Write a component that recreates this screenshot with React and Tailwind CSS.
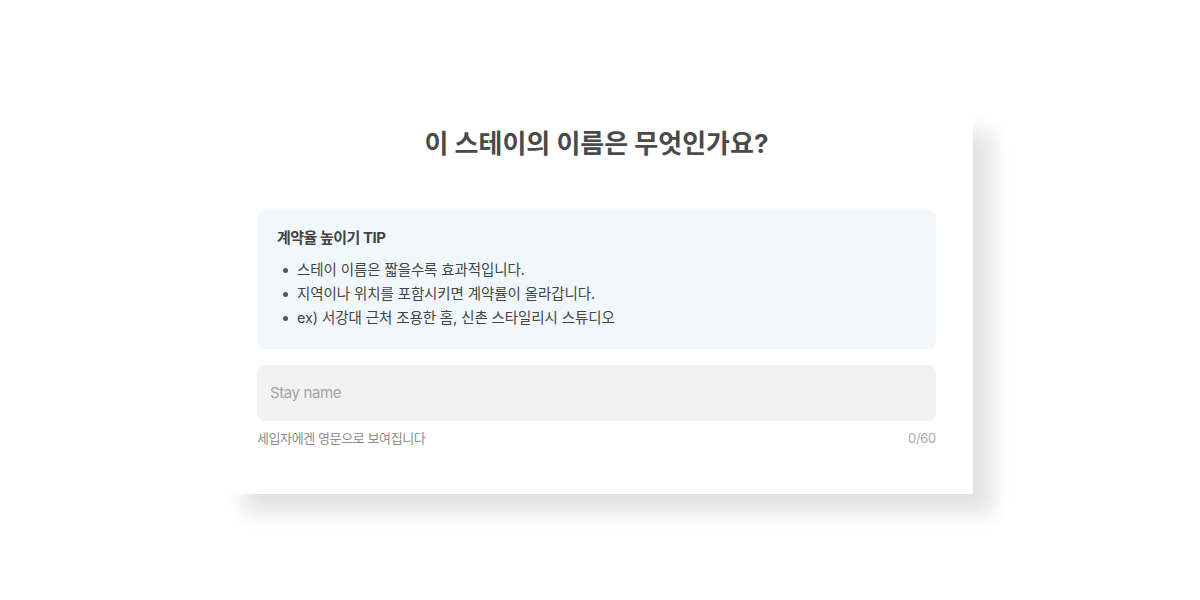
export default function App() {
  const font = { fontFamily: 'Inter, "Noto Sans CJK KR", sans-serif' };
  const tips = [
    "스테이 이름은 짧을수록 효과적입니다.",
    "지역이나 위치를 포함시키면 계약률이 올라갑니다.",
    "ex) 서강대 근처 조용한 홈, 신촌 스타일리시 스튜디오",
  ];
  return (
    <div className="w-[1200px] h-[600px] bg-white overflow-hidden" style={font}>
      <div className="ml-[220px] mt-[108px] w-[753px] h-[386px] bg-white shadow-[22px_22px_18px_-2px_rgba(0,0,0,0.11)] px-[37px] pt-[20px]">
        <h1 className="text-center text-[26px] leading-[32px] font-bold text-[#4a4a4a] tracking-[0px]">
          이 스테이의 이름은 무엇인가요?
        </h1>
        <div className="mt-[50px] h-[139px] rounded-[8px] bg-[#f1f8fc] px-5 pt-[17px]">
          <div className="text-[15px] leading-[22px] font-bold text-[#444] tracking-[-0.5px]">
            계약율 높이기 TIP
          </div>
          <ul className="mt-[9px]">
            {tips.map((t) => (
              <li key={t} className="flex items-center h-[24px] text-[14.5px] text-[#444] tracking-[-0.1px]">
                <span className="ml-[6px] mr-[9px] w-[5px] h-[5px] rounded-full bg-[#555] shrink-0" />
                {t}
              </li>
            ))}
          </ul>
        </div>
        <div className="mt-4 h-[56px] rounded-[8px] bg-[#f2f2f2] px-[13px] flex items-center">
          <span className="text-[15px] text-[#a3a3a3] tracking-[-0.4px]">Stay name</span>
        </div>
        <div className="mt-[8px] flex justify-between text-[13px] leading-[18px]">
          <span className="text-[#8a8a8a] tracking-[-0.4px]">세입자에겐 영문으로 보여집니다</span>
          <span className="text-[#aaa] tracking-[-0.3px]">0/60</span>
        </div>
      </div>
    </div>
  );
}
